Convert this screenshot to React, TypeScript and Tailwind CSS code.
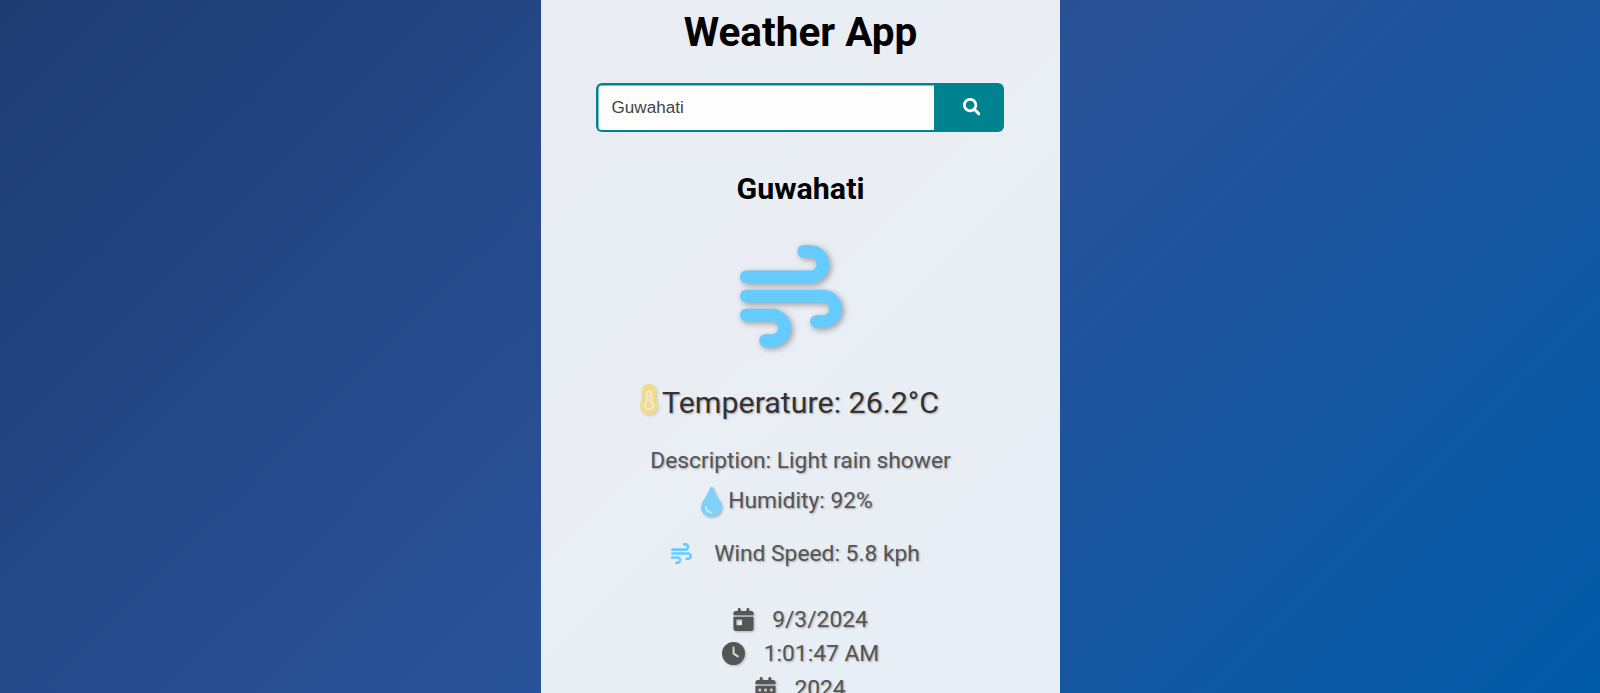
import type { ReactNode } from "react";
import { FaSearch } from "react-icons/fa";
import { FaWind, FaCalendarDay, FaClock, FaCalendarDays } from "react-icons/fa6";

const textShadow = "[text-shadow:1px_1px_2px_rgba(0,0,0,0.3)]";
const iconShadow = "drop-shadow-[1px_1px_1px_rgba(0,0,0,0.25)]";

function Thermometer() {
  return (
    <svg viewBox="0 0 18 31" className="-mt-[7px] h-[31px] w-[18px] drop-shadow-[1px_1px_1px_rgba(0,0,0,0.15)]">
      <path fill="#f0dc8c" d="M9 0C4.700 0 1.600 3 1.600 7v9.500C.6 18 0 19.800 0 21.800 0 27 4 31 9 31s9-4 9-9.200c0-2-.6-3.800-1.600-5.300V7C16.400 3 13.300 0 9 0Z" />
      <path fill="none" stroke="#f3efdc" strokeWidth="1.500" d="M9 7.500c-1.500 0-2.400 1-2.400 2.400v7.700a4.200 4.200 0 1 0 4.800 0V9.900C11.400 8.500 10.500 7.500 9 7.500Z" />
      <path fill="none" stroke="#f3efdc" strokeWidth="1" strokeLinecap="round" d="M9 12v6" />
    </svg>
  );
}

function Drop() {
  return (
    <svg viewBox="0 0 21 30" className={`mt-px mr-[6px] h-[30px] w-[21px] ${iconShadow}`}>
      <path fill="#80d0fa" d="M10.600 0c-.8 0-1.300.5-1.600 1.300C7.500 5.600 5.300 8.900 3.200 12.200 1.400 15 0 17.200 0 20c0 5.700 4.600 10 10.500 10S21 25.700 21 20c0-2.800-1.400-5-3.200-7.800-2.100-3.300-4.300-6.600-5.600-10.900C11.900.5 11.400 0 10.600 0Z" />
      <path fill="none" stroke="#d8effb" strokeWidth="1.500" strokeLinecap="round" d="M4.700 19.800c.2 3.200 2.300 5.400 5.600 5.700" />
    </svg>
  );
}

function Row({ icon, className, children }: { icon?: ReactNode; className: string; children: ReactNode }) {
  return (
    <div className={`flex shrink-0 items-center whitespace-nowrap text-[22.8px] text-[#555] ${textShadow} ${className}`}>
      {icon}
      <span>{children}</span>
    </div>
  );
}

export default function App() {
  return (
    <div className="flex h-[693px] justify-center overflow-hidden bg-[linear-gradient(135deg,#1e3c72,#2a5298,#005aa7)] font-['Roboto',sans-serif]">
      <main className="flex h-full w-[519px] flex-col items-center overflow-hidden bg-white/90 pl-px">
        <h1 className="mt-[8px] shrink-0 text-[40.5px] leading-[48px] font-bold text-black">Weather App</h1>
        <div className="mt-[27px] mr-px flex h-[49px] w-[408px] shrink-0">
          <div className="flex flex-1 items-center rounded-l-[6px] border-[2px] border-r-0 border-[#00838f] bg-white/90 pl-[13.5px] font-['Liberation_Sans',sans-serif] text-[17.1px] text-[#444] shadow-[inset_0.5px_0.5px_0_#00838f]">
            Guwahati
          </div>
          <button className="flex w-[70px] items-center justify-center rounded-r-[6px] bg-[#00838f] pb-px pl-[5px] text-[17.5px] text-white">
            <FaSearch />
          </button>
        </div>
        <h2 className="mt-[39px] shrink-0 text-[30.4px] leading-9 font-bold text-black">Guwahati</h2>
        <FaWind className="mt-[37.5px] mr-[19px] shrink-0 text-[102px] text-[#66ccff] drop-shadow-[2px_2px_3px_rgba(0,0,0,0.35)]" />
        <div className={`mt-[36px] mr-[22px] flex shrink-0 items-center text-[30.4px] leading-10 whitespace-nowrap text-[#333] ${textShadow}`}>
          <Thermometer />
          <span className="ml-[4px]">Temperature: 26.2°C</span>
        </div>
        <Row className="mt-[22px] leading-8">Description: Light rain shower</Row>
        <Row className="mt-[8.5px] mr-[27px] leading-8" icon={<Drop />}>
          Humidity: 92%
        </Row>
        <Row className="mt-[21px] mr-[10px] leading-8" icon={<FaWind className="-mt-px mr-[22px] text-[21px] text-[#66ccff]" />}>
          Wind Speed: 5.8 kph
        </Row>
        <Row className="mt-[33px] leading-[34.4px]" icon={<FaCalendarDay className={`-mt-[2px] mr-[18px] w-[21px] text-[23px] ${iconShadow}`} />}>
          9/3/2024
        </Row>
        <Row className="leading-[34.4px]" icon={<FaClock className={`-mt-[2px] mr-[19px] text-[23px] ${iconShadow}`} />}>
          1:01:47 AM
        </Row>
        <Row className="leading-[34.4px]" icon={<FaCalendarDays className={`-mt-[2px] mr-[18px] w-[21px] text-[23px] ${iconShadow}`} />}>
          2024
        </Row>
      </main>
    </div>
  );
}
